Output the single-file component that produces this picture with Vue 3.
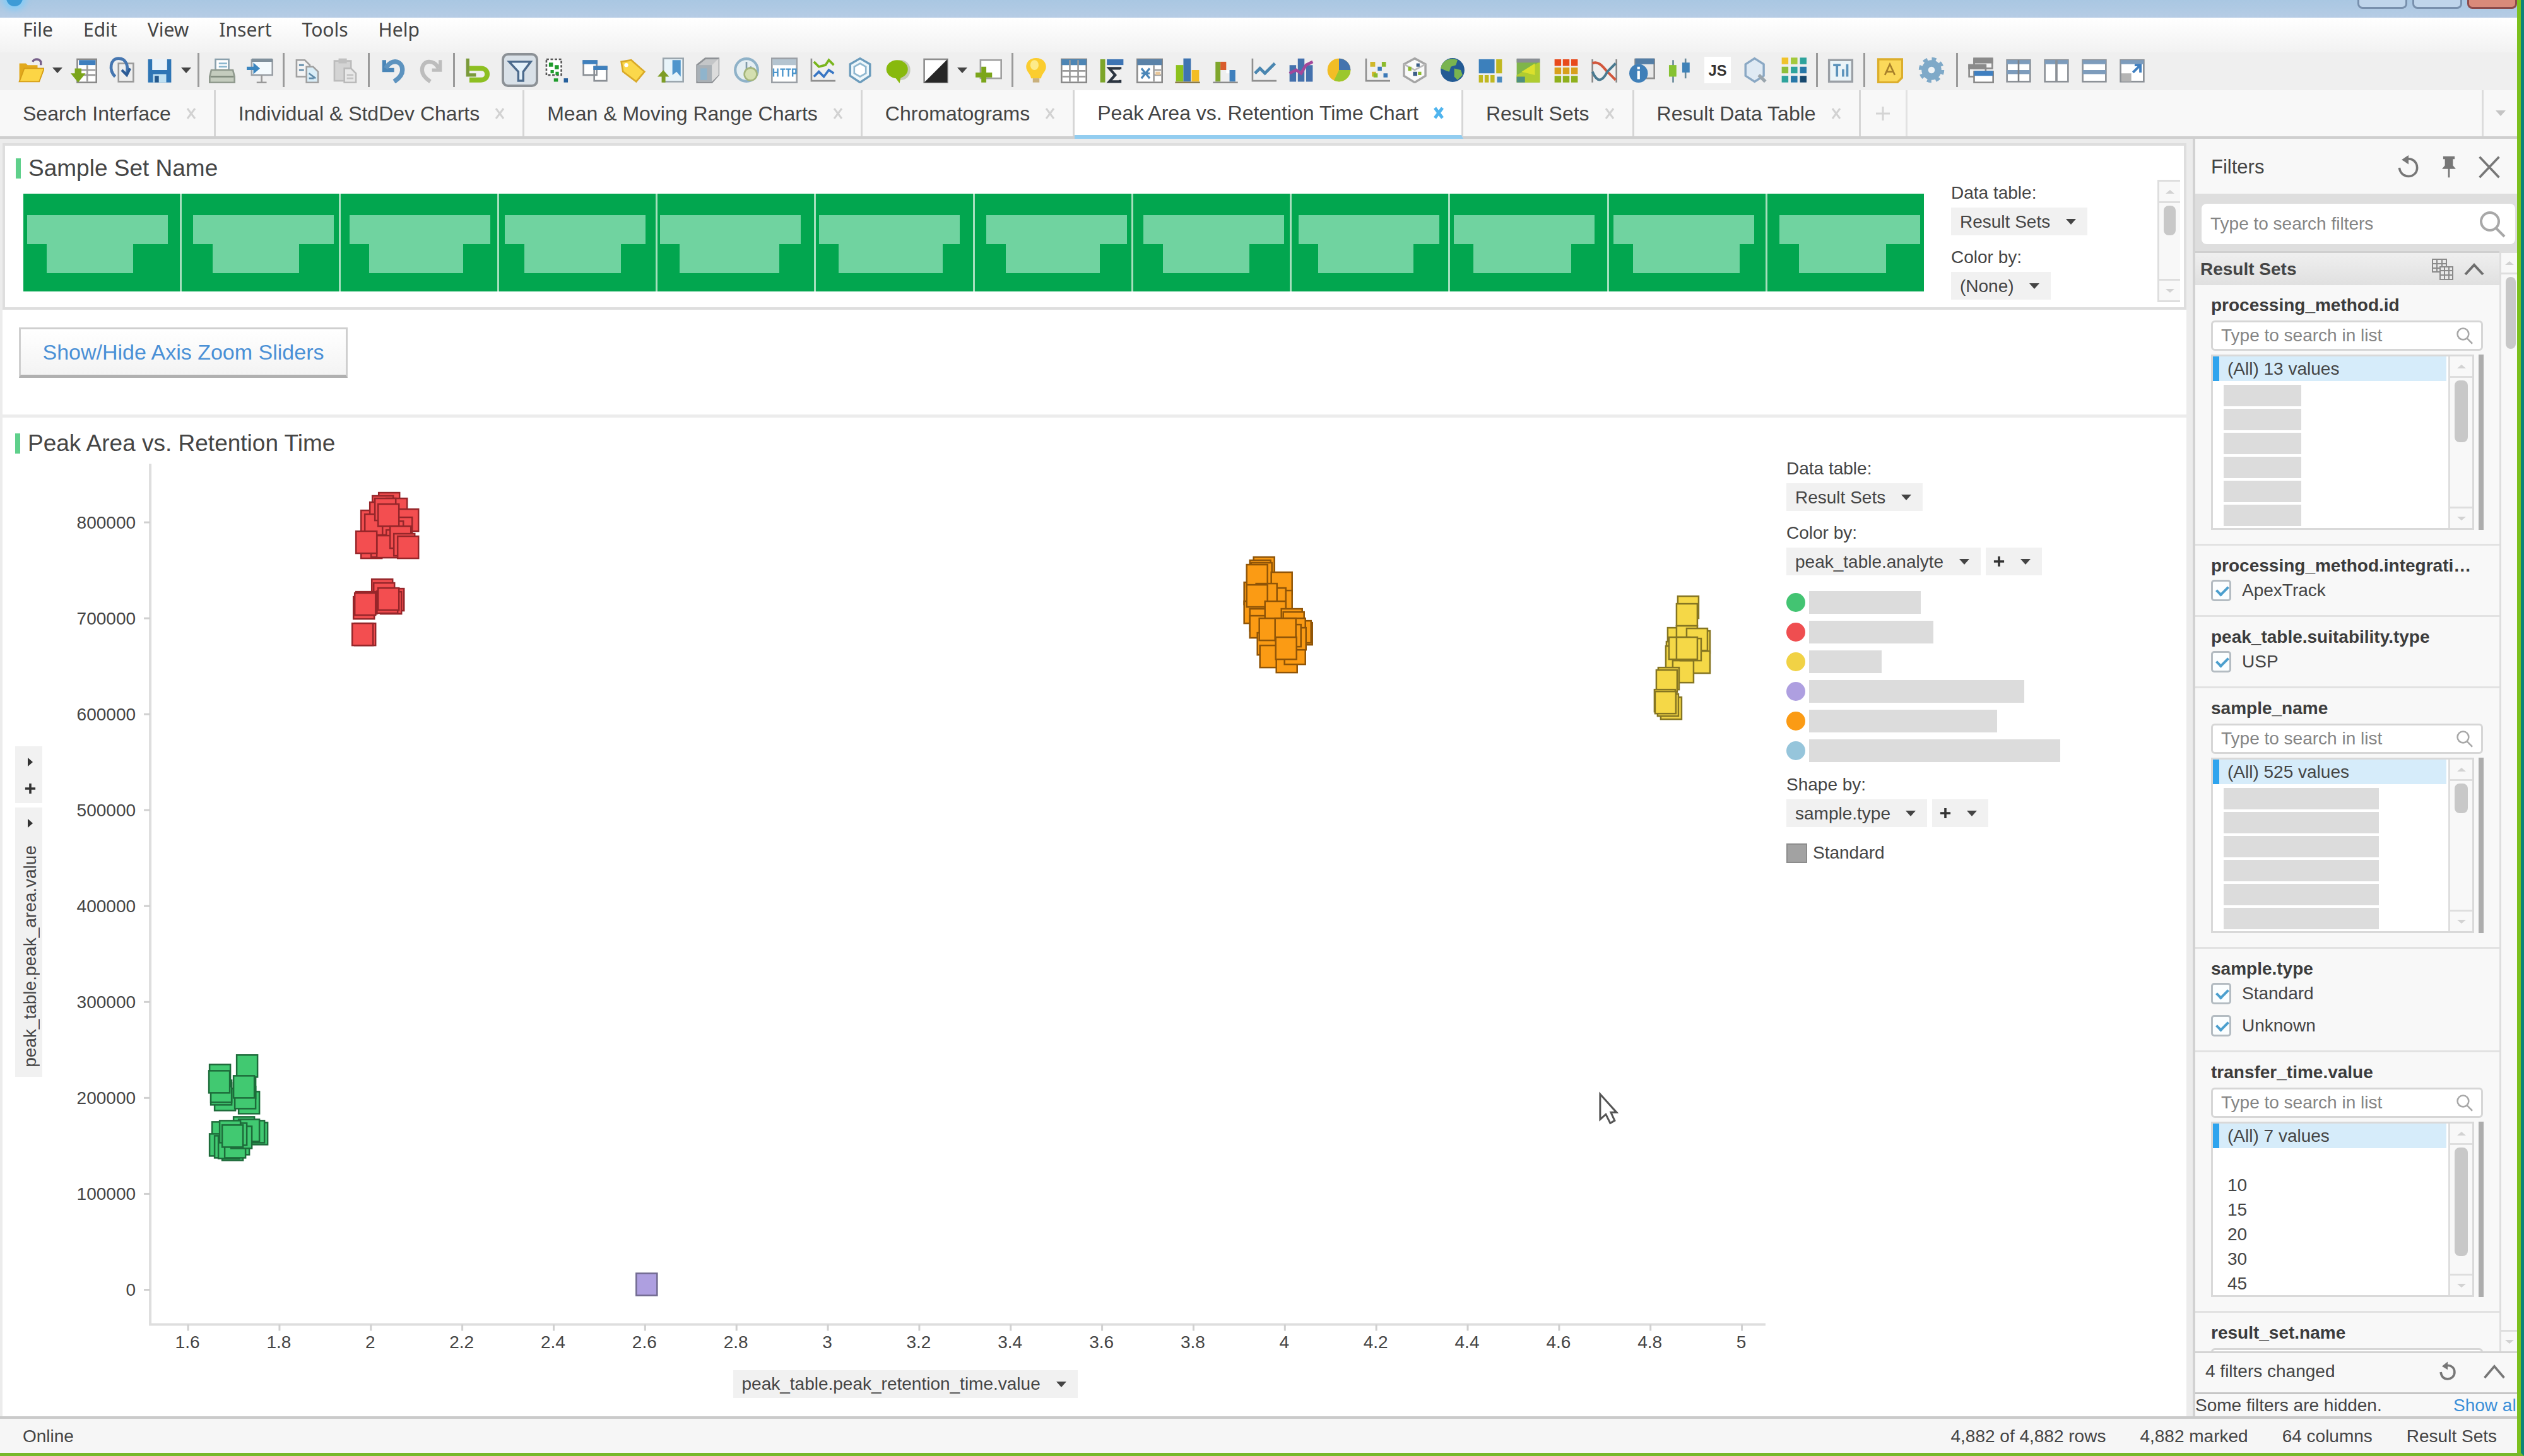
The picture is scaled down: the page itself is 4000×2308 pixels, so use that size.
<script setup>
import { ref } from 'vue'

const menus = ['File', 'Edit', 'View', 'Insert', 'Tools', 'Help']

const tabs = [
  'Search Interface',
  'Individual & StdDev Charts',
  'Mean & Moving Range Charts',
  'Chromatograms',
  'Peak Area vs. Retention Time Chart',
  'Result Sets',
  'Result Data Table',
]
const activeTab = ref(4)

const frame = '<rect x="1" y="2" width="14" height="13" fill="#fff" stroke="#8b9096"/>'
const axes = '<path d="M1.5 1v13.5H16" fill="none" stroke="#8f8f8f"/>'
const gridBase = '<rect x=".5" y="1.500" width="15" height="14" fill="#fff" stroke="#8a8a8a"/>'

// Toolbar glyphs, drawn on a 16 × 16 grid
const art = {
  open: '<path d="M1 15V4h4l1 1h6v10z" fill="#e2a91c"/><path d="M1 15l3-8h12l-3 8z" fill="#fcd545" stroke="#d59d17" stroke-width=".7"/><path d="M9 3c1-2 4-2 5 0v2" fill="none" stroke="#77608a" stroke-width="1.300"/>',
  addData: '<rect x="4" y="1.500" width="11.500" height="14" fill="#fff" stroke="#8a8a8a"/><path d="M5 2h10v3H5z" fill="#3f7fbe"/><path d="M5 8h10M5 11h10M10 5v10" stroke="#9a9a9a"/><path d="M2.500 7h4v3H9l-4.500 5.500L0 10h2.500z" fill="#7ba51b"/>',
  reload: '<path d="M6 4h9v11H6z" fill="#eee" stroke="#9a9a9a"/><path d="M4 12C0 8 1 1 6 1s6 5 5 9" fill="none" stroke="#4676b0" stroke-width="1.800"/><path d="M8 8l3 3 2-4" fill="none" stroke="#2d5c96" stroke-width="1.600"/>',
  save: '<path d="M1 1.500h14v14H1z" fill="#2e75b5"/><path d="M3.500 1.500h9V8h-9z" fill="#e9f2fa"/><path d="M4 10.500h8v5H4z" fill="#bfe0f2"/><path d="M5 11.500h2.500v4H5z" fill="#24588c"/>',
  print: '<path d="M4 1.500h8V8H4z" fill="#fff" stroke="#8aa0ac"/><path d="M6 4h5M6 6h5" stroke="#86b4cc"/><path d="M1.500 8h13l1 4v3.500H.5V12z" fill="#c4ccbe" stroke="#909a8e"/><path d="M1 12h14" stroke="#7f8a7c"/>',
  present: '<rect x="3" y="2" width="12.500" height="9" fill="#f4fafd" stroke="#9a9fa5"/><path d="M3 2h12.500" stroke="#80909c" stroke-width="2"/><path d="M9 11v4M6 15.500h6" stroke="#999"/><path d="M0 6h4V3.500L8 7l-4 3.500V8H0z" fill="#3c86bf"/>',
  copy: '<path d="M1.500 2h5l3 3v7h-8z" fill="#f4f4f4" stroke="#a0a0a0"/><path d="M7.500 6h4l3 3v6.500h-7z" fill="#d9edf7" stroke="#a0a0a0"/><path d="M3 5h3M3 8h3M9 10l4 3M9 13h3" stroke="#5f8aa8"/>',
  paste: '<rect x="1.500" y="2.500" width="10" height="12" fill="#d4d4d4" stroke="#bcbcbc"/><path d="M4 1h5v3H4z" fill="#c0c0c0"/><path d="M7.500 7h4l3 3v5.500h-7z" fill="#e8e8e8" stroke="#bababa"/><path d="M9 11h4M9 13h4" stroke="#c4c4c4"/>',
  undo: '<path d="M3 2v6h6" fill="none" stroke="#4a86b8" stroke-width="2.400"/><path d="M4 7c3-6 10-5 10 1 0 3-2 5-5 7" fill="none" stroke="#5d93bf" stroke-width="2.800"/>',
  redo: '<path d="M14 2v6H9" fill="none" stroke="#bdbdbd" stroke-width="2"/><path d="M13 7C10 1 3 2 3 8c0 3 2 5 5 7" fill="none" stroke="#bdbdbd" stroke-width="2.400"/>',
  revert: '<path d="M2 1v10h5" fill="none" stroke="#7a9a3a" stroke-width="2"/><path d="M3 7h7c5 0 5 7 0 7H3" fill="none" stroke="#8dbf21" stroke-width="3"/>',
  filter: '<path d="M1.500 3h13L10 9v5.500H7V9z" fill="#e4f1fa" stroke="#4b6a8c" stroke-width="1.300"/>',
  mark: '<rect x="1.500" y="1.500" width="9" height="9.500" fill="#fff" stroke="#555" stroke-dasharray="1.500 1"/><path d="M3 3.500h2.500V6H3zM6.500 5H9v2.500H6.500zM4 8h2v2H4zM7 9h2v2H7zM6 13h2.500v2H6z" fill="#1f9b2c"/><path d="M12 13h2.500v2.500H12z" fill="#245f9c"/>',
  windows: '<path d="M1 2.500h8V11H1zM7.500 6H15v8.500H7.500z" fill="#fff" stroke="#8a8f95"/><path d="M.5 2h9v2.500h-9zM7 5.500h8.500V8H7z" fill="#3f80bd"/>',
  tag: '<path d="M1 3l6-1 8 7-5 6-8-6z" fill="#fbd84b" stroke="#d9a928"/><circle cx="4" cy="5" r="1.200" fill="#fff"/>',
  bookmark: '<rect x="3.500" y="1" width="12" height="14" fill="#e8f4fa" stroke="#9aa5ad"/><path d="M9 2h5v10l-2.500-3L9 11z" fill="#4f95cc"/><path d="M3.500 8L7 12H4.800v3.500H2.500V12H0z" fill="#7d9d25"/>',
  cube: '<path d="M1 5l5-4h8v10l-4 4.500H1z" fill="#c4c6c8" stroke="#8f9296"/><path d="M1 5h9v10H1z" fill="#a9b0b6"/><path d="M10 5l4-4v10l-4 4z" fill="#dcdcdc"/><path d="M3 7h4v7H3z" fill="#8fb4cc"/>',
  clock: '<circle cx="8" cy="8" r="6.800" fill="#e4eef2" stroke="#8fb2c8" stroke-width="1.600"/><path d="M8 8V3M8 8l3-2" stroke="#7f9aa8"/><circle cx="10.500" cy="10.500" r="3.800" fill="#d4dfb0" stroke="#a4b57c"/>',
  http: '<rect x=".5" y="1" width="15" height="14.500" fill="#fff" stroke="#9a9fa5"/><path d="M1 1.500h14V5H1z" fill="#b4c4d0"/><path d="M1.500 7v5M4 7v5M1.500 9.500H4M5.500 7.500h3M7 7.500V12M9 7.500h3M10.500 7.500V12M13 12V7.500h2V10h-2" fill="none" stroke="#4a94cc" stroke-width=".9"/>',
  trend: axes + '<path d="M3 3l3 3 4-1 2-3 3 3" fill="none" stroke="#79b51c" stroke-width="1.400"/><path d="M3 12l3-3 3 3 3-4 3 2" fill="none" stroke="#3876c4" stroke-width="1.400"/>',
  hex: '<path d="M8 1l6 3.500v7L8 15.500 2 11.500v-7z" fill="#eef7fb" stroke="#6c9cbc" stroke-width="1.300"/><path d="M8 4l3.500 2v4L8 12l-3.500-2V6z" fill="#fff" stroke="#90b8d0"/>',
  bubble: '<ellipse cx="10" cy="8" rx="5.500" ry="6" fill="#c5cbb8"/><ellipse cx="7.500" cy="7.500" rx="6.500" ry="5.500" fill="#88b90d"/><path d="M6 12l3 4 1-5z" fill="#88b90d"/>',
  contrast: '<rect x="1" y="1.500" width="14" height="14" fill="#fff" stroke="#8e8e8e"/><path d="M15 1.500v14H1z" fill="#262626"/>',
  addPage: '<rect x="3" y="2" width="12.500" height="11" fill="#fff" stroke="#a0a0a0"/><path d="M3.500 6h3v3.500H10v3H6.500v3h-3v-3H0v-3h3.500z" fill="#7ba51b"/>',
  bulb: '<path d="M8 .8c-4 0-6 2.700-6 5.200 0 3 2.500 4 3 7h6c.5-3 3-4 3-7 0-2.500-2-5.200-6-5.200z" fill="#fbcd2f"/><ellipse cx="7" cy="5" rx="2.500" ry="3" fill="#fdeb8a"/><path d="M6 13h4v2.500H6z" fill="#c9b07c"/>',
  table: gridBase + '<path d="M.5 1.500h15V5H.5z" fill="#4d85b4"/><path d="M5.500 2v13M10.500 2v13M1 8.500h14M1 12h14" stroke="#9a9a9a"/>',
  sigma: '<path d="M1 1.500h3v14H1z" fill="#7ca52a"/><path d="M5 1.500h10V5H5z" fill="#3d74b4"/><path d="M13 7.500V7H6.500l3.500 4-3.500 4H13v-1" fill="none" stroke="#2b3440" stroke-width="1.600"/>',
  cross: gridBase + '<path d="M.5 1.500h15V5H.5z" fill="#5a82a8"/><path d="M10.500 5v10M11 8h4M11 11h4" stroke="#a0a0a0"/><path d="M3 7l5 6M8 7l-5 6M3 10h5" stroke="#4a86b8" stroke-width="1.200"/><path d="M11.500 9h3v2h-3z" fill="#e8c79a"/>',
  bars: '<path d="M1 5h4.500v10H1z" fill="#8cc21c"/><path d="M5.500 1H10v14H5.500z" fill="#3f74b0"/><path d="M10.500 8H15v7h-4.500z" fill="#f3bd24"/><path d="M.5 15.500h15" stroke="#8a7a4a"/>',
  waterfall: '<path d="M2 3h3v12H2z" fill="#7fa62c"/><path d="M5 3h3.500v5H5z" fill="#d95b2c"/><path d="M8.500 8H11v2H8.500z" fill="#fff"/><path d="M10.500 8H14v7h-3.500z" fill="#3f80bd"/><path d="M.5 15.500h15" stroke="#8a8a8a"/>',
  line: axes + '<path d="M3 10l3-3 3 3 6-6" fill="none" stroke="#4a86b0" stroke-width="1.800"/>',
  combo: '<path d="M1 5h4v10H1zM6 1h4v14H6zM11 5h4v10h-4z" fill="#4471ad"/><path d="M1 10l4-2 3 2 3-5 4-2" fill="none" stroke="#a4479a" stroke-width="1.800"/>',
  pie: '<circle cx="8" cy="8" r="7" fill="#f2bd25"/><path d="M8 8V1a7 7 0 017 7z" fill="#4474ae"/><path d="M8 8h7a7 7 0 01-10 6.300z" fill="#9bc72d"/>',
  scatter: axes + '<path d="M4 3h3v3H4zM5 9h2.500v3H5z" fill="#d0b82a"/><path d="M11 3h2.500v3H11zM6 10h2.500v2.500H6z" fill="#8cba2c"/><path d="M8.500 6H11v2.500H8.500zM12 10h2.500v2.500H12z" fill="#3c7ab8"/>',
  scatter3d: '<path d="M8 1l6.500 3.500v7L8 15.500l-6.500-4v-7z" fill="#fafafa" stroke="#a5a5a5" stroke-width="1.300"/><path d="M1.500 4.500L8 8l6.500-3.500" fill="none" stroke="#bbb"/><path d="M4 6h2v2.500H4zM10 9h2v2h-2z" fill="#8cba2c"/><path d="M7 9h2.500v2.500H7zM9 4h2v2H9z" fill="#3c5f88"/>',
  globe: '<circle cx="8" cy="8" r="7.200" fill="#235a94"/><path d="M3 3c2-2 6-2 8-1l-1 3-3 1-1 3-3-1-2-1c0-2 1-3 2-4zM9 7l4 1 1 3-3 3-2-2z" fill="#79b450"/>',
  treemap: '<path d="M1 1.500h9.500V10H1z" fill="#3c80bc"/><path d="M11.500 1.500H15V10h-3.500zM1 11h2.500v4.500H1zM4.500 11H7v4.500H4.500zM8 11h2.500v4.500H8z" fill="#c0b820"/><path d="M12 12h3v3.500h-3z" fill="#4a8ac0"/>',
  heat: '<rect x="1" y="1.500" width="14" height="14" fill="#7fb54a"/><path d="M1 11l14-8v12.500H1z" fill="#b0cc30"/><path d="M4 9l8-5v7z" fill="#dbe02c"/><path d="M1 1h14v2.500H1z" fill="#8a8f95"/><path d="M1 12h5v3.500H1z" fill="#4f8f80"/>',
  heatGrid: '<path d="M1 1.500h4v4H1zM6 1.500h4v4H6zM11 1.500h4v4h-4z" fill="#e84a1c"/><path d="M1 6.500h4v4H1zM6 6.500h4v4H6zM11 6.500h4v4h-4z" fill="#d8a01c"/><path d="M1 11.500h4v4H1zM6 11.500h4v4H6zM11 11.500h4v4h-4z" fill="#8fb01c"/>',
  parallel: '<path d="M1 1.500v14M15.500 1.500v14" stroke="#8a8a8a"/><path d="M1 4c4-2 7 3 9 5s3 3 5 5" fill="none" stroke="#d2573c" stroke-width="1.500"/><path d="M1 9c3 7 6 6 9 0l5-5" fill="none" stroke="#4a7a90" stroke-width="1.500"/>',
  info: '<path d="M4 1.500h11.500V13H4z" fill="#e8e8e8" stroke="#909090"/><path d="M4 1h11.500v3.500H4z" fill="#547ea6"/><circle cx="6" cy="10" r="5.600" fill="#3f7fb8"/><path d="M6 6v1.500M6 8.500v5" stroke="#fff" stroke-width="1.600"/>',
  box: '<path d="M4 2v13.500M11.500 1v12" stroke="#6a8a9a"/><path d="M1.500 5h4.500v7H1.500z" fill="#86c232"/><path d="M9.500 3.500H14v6H9.500z" fill="#3f82b8"/>',
  js: '<rect width="16" height="16" fill="#fff"/><text x="8" y="11.500" font-size="9" font-weight="700" font-family="Liberation Sans, sans-serif" text-anchor="middle" fill="#333">JS</text>',
  find: '<path d="M7.500 1l5.500 3.500v7L7.500 15 2 11.500v-7z" fill="#dfeaf4" stroke="#8aa8c4" stroke-width="1.300"/><path d="M10 11l4 4" stroke="#9aa5ad" stroke-width="2"/>',
  tiles: '<path d="M1 .5h4v4H1z" fill="#f0c32c"/><path d="M6.500.5h4v4h-4z" fill="#a4c93c"/><path d="M12 .5h4v4h-4z" fill="#2ea39c"/><path d="M1 6h4v4H1z" fill="#8fbf3a"/><path d="M6.500 6h4v4h-4z" fill="#2ea39c"/><path d="M12 6h4v4h-4z" fill="#2878a8"/><path d="M1 11.500h4v4H1z" fill="#2ea39c"/><path d="M6.500 11.500h4v4h-4z" fill="#2878a8"/><path d="M12 11.500h4v4h-4z" fill="#17486e"/>',
  text: '<rect x="1" y="2" width="14" height="13" fill="#eaf4f8" stroke="#9a9fa5" stroke-width="1.300"/><path d="M3.500 5H8M5.800 5v7M9.500 12V7.500M12 12V4.500" stroke="#5b93bb" stroke-width="1.400"/>',
  note: '<path d="M1 1.500h14.500v11l-3 3H1z" fill="#fbd95a" stroke="#dcae2c" stroke-width="1.300"/><path d="M5 11l3-6.500L11 11M6 9h4" fill="none" stroke="#a8802a"/>',
  gear: '<circle cx="8" cy="8" r="6" fill="#7fa9c8"/><circle cx="8" cy="8" r="6.600" fill="none" stroke="#7fa9c8" stroke-width="2.200" stroke-dasharray="2.600 2.580"/><circle cx="8" cy="8" r="2" fill="#eef2f5"/>',
  cascade: '<path d="M4 1h11v6H4zM1 5h10v7H1z" fill="#f4f4f4" stroke="#8a8a8a"/><path d="M3.500 1h12v3h-12zM.5 4.500h10.500v3H.5z" fill="#8a8a8a"/><rect x="4" y="9" width="11.500" height="6.500" fill="#fff" stroke="#8a8a8a"/><path d="M4 8.500h11.500v3H4z" fill="#3f7fc0"/>',
  quad: frame + '<path d="M1 2h14v2.500H1zM1 8h14v2.500H1z" fill="#7d9cbc"/><path d="M8 2v13" stroke="#7d8085"/>',
  cols: frame + '<path d="M1 2h14v2.500H1z" fill="#7d9cbc"/><path d="M8 2v13" stroke="#8b9096" stroke-width="1.400"/>',
  rows: frame + '<path d="M1 2h14v2.500H1zM1 8h14v2.500H1z" fill="#7d9cbc"/>',
  maxi: frame + '<path d="M1 2h14v2.500H1z" fill="#7d9cbc"/><path d="M1.500 10h6v5h-6z" fill="#b4b4b4"/><path d="M8.500 9.500L13 5M9.500 5H13v4.500" fill="none" stroke="#3f7fc0" stroke-width="1.500"/>',
}

const toolbar = [
  'open', 'v', 'addData', 'reload', 'save', 'v', '|', 'print', 'present', '|', 'copy', 'paste', '|',
  'undo', 'redo', '|', 'revert', 'filter', 'mark', 'windows', 'tag', 'bookmark', 'cube', 'clock', 'http',
  'trend', 'hex', 'bubble', 'contrast', 'v', 'addPage', '|', 'bulb', 'table', 'sigma', 'cross', 'bars',
  'waterfall', 'line', 'combo', 'pie', 'scatter', 'scatter3d', 'globe', 'treemap', 'heat', 'heatGrid',
  'parallel', 'info', 'box', 'js', 'find', 'tiles', '|', 'text', '|', 'note', 'gear', '|',
  'cascade', 'quad', 'cols', 'rows', 'maxi',
]

// Sample-set blocks: shift of the masked name and width of its second line
const sampleSets = [
  [6, 137], [18, 137], [14, 149], [9, 153], [4, 158], [5, 165],
  [18, 149], [16, 137], [11, 151], [6, 155], [7, 169], [19, 138],
]

const yTicks = [800000, 700000, 600000, 500000, 400000, 300000, 200000, 100000, 0]
const yPos = (v) => 2044 - (v / 100000) * 152
const xTicks = Array.from({ length: 18 }, (_, i) => Number((1.6 + i * 0.2).toFixed(1)))
const xPos = (i) => 298 + i * 144.8

const clusters = [
  {
    fill: '#f34e50', stroke: '#96262a',
    points: [
      [600, 781], [590, 786], [612, 790], [630, 807], [572, 809], [586, 796], [578, 815], [620, 820], [606, 826],
      [594, 790], [599, 799], [572, 850], [588, 848], [612, 840], [597, 849], [618, 834], [624, 846], [630, 850],
      [564, 842], [589, 918], [592, 924], [607, 933], [603, 938], [597, 937], [599, 932], [564, 938], [560, 946],
      [562, 940], [562, 988], [558, 988],
    ],
  },
  {
    fill: '#fb9b14', stroke: '#8f5407',
    points: [
      [1986, 883], [1980, 888], [1982, 892], [2014, 907], [2014, 936], [2004, 932], [1971, 923], [1975, 895],
      [1990, 925], [1971, 953], [1975, 927], [1980, 965], [1980, 976], [2004, 953], [2030, 965], [2033, 970],
      [2046, 987], [2044, 984], [2035, 980], [1992, 1003], [1996, 1023], [2022, 1031], [2035, 1018], [2036, 995],
      [2028, 990], [1995, 980], [2020, 980], [2021, 1010],
    ],
  },
  {
    fill: '#f5d847', stroke: '#857522',
    points: [
      [2658, 945], [2656, 957], [2642, 995], [2656, 992], [2676, 1000], [2672, 996], [2676, 1032], [2640, 1017],
      [2639, 1024], [2650, 1047], [2644, 1010], [2662, 1012], [2656, 1010], [2627, 1058], [2624, 1062],
      [2631, 1105], [2626, 1100], [2621, 1093], [2622, 1096],
    ],
  },
  {
    fill: '#41c971', stroke: '#1d6b3a',
    points: [
      [340, 1725], [334, 1716], [334, 1712], [332, 1687], [331, 1697], [378, 1730], [372, 1706], [375, 1672],
      [372, 1722], [370, 1705], [336, 1778], [332, 1797], [340, 1800], [352, 1804], [346, 1801], [391, 1779],
      [386, 1776], [370, 1770], [378, 1774], [362, 1795], [356, 1800], [366, 1785], [358, 1780], [348, 1776], [352, 1783],
    ],
  },
  { fill: '#ae9fe0', stroke: '#716a90', points: [[1008, 2018]] },
]

const analytes = [
  ['#43c472', 177], ['#ef4e50', 197], ['#f1d245', 115], ['#ae9fe0', 341], ['#fb9b14', 298], ['#96c5db', 398],
]

const filterGroups = [
  { name: 'processing_method.id', list: '(All) 13 values', masks: 123, thumb: 98 },
  { name: 'processing_method.integration_algorithm', checks: ['ApexTrack'] },
  { name: 'peak_table.suitability.type', checks: ['USP'] },
  { name: 'sample_name', list: '(All) 525 values', masks: 246, thumb: 47 },
  { name: 'sample.type', checks: ['Standard', 'Unknown'] },
  { name: 'transfer_time.value', list: '(All) 7 values', values: ['', '10', '15', '20', '30', '45'], thumb: 172 },
  { name: 'result_set.name', list: '(All) 9 values', values: [], thumb: 90 },
]
</script>

<template>
  <div class="app">
    <header class="titlebar">
      <span class="orb"></span>
      <div class="win-buttons">
        <button class="win" aria-label="Minimize"></button>
        <button class="win" aria-label="Maximize"></button>
        <button class="win close" aria-label="Close"></button>
      </div>
    </header>

    <nav class="menubar">
      <button v-for="m in menus" :key="m" class="menu">{{ m }}</button>
    </nav>

    <div class="toolbar">
      <template v-for="(t, i) in toolbar" :key="i">
        <span v-if="t === '|'" class="sep"></span>
        <button v-else-if="t === 'v'" class="drop" aria-label="More"><i class="tri"></i></button>
        <button v-else class="tool" :class="{ pressed: t === 'filter', wide: t === 'note' || t === 'gear' }" :aria-label="t">
          <svg viewBox="0 0 16 16" v-html="art[t]"></svg>
        </button>
      </template>
    </div>

    <div class="tabs">
      <div v-for="(t, i) in tabs" :key="t" class="tab" :class="{ active: i === activeTab }">
        <button class="tab-name" @click="activeTab = i">{{ t }}</button>
        <button class="tab-x" :aria-label="'Close ' + t">
          <svg viewBox="0 0 16 20"><path d="M2 2l12 16M14 2L2 18" /></svg>
        </button>
      </div>
      <button class="tab-add" aria-label="New page">
        <svg viewBox="0 0 24 24"><path d="M12 1v22M1 12h22" /></svg>
      </button>
      <button class="tab-more" aria-label="All pages"><i class="tri pale"></i></button>
    </div>

    <div class="work">
      <main class="main">
        <section class="panel samples">
          <div class="samples-left">
            <h2>Sample Set Name</h2>
            <div class="tiles">
              <div v-for="(s, i) in sampleSets" :key="i" class="tile">
                <div class="mask-top" :style="{ marginLeft: s[0] + 'px' }"></div>
                <div class="mask-low" :style="{ marginLeft: s[0] + 31 + 'px', width: s[1] + 'px' }"></div>
              </div>
            </div>
          </div>
          <div class="samples-legend">
            <label for="dt1">Data table:</label>
            <div class="pick"><select id="dt1"><option>Result Sets</option></select><i class="tri"></i></div>
            <label for="cb1">Color by:</label>
            <div class="pick"><select id="cb1"><option>(None)</option></select><i class="tri"></i></div>
          </div>
          <div class="scroll samples-scroll">
            <span class="arrow up"><i></i></span>
            <span class="track"><b :style="{ height: '47px' }"></b></span>
            <span class="arrow down"><i></i></span>
          </div>
        </section>

        <section class="button-row">
          <button class="zoom-btn">Show/Hide Axis Zoom Sliders</button>
        </section>

        <section class="chart">
          <h2>Peak Area vs. Retention Time</h2>
          <div class="chart-body">
            <div class="y-select">
              <button class="y-add" aria-label="Add column">
                <svg class="play" viewBox="0 0 10 14"><path d="M1 0l8 7-8 7z" /></svg>
                <svg class="plus" viewBox="0 0 20 20"><path d="M10 1v18M1 10h18" /></svg>
              </button>
              <button class="y-name">
                <svg class="play" viewBox="0 0 10 14"><path d="M1 0l8 7-8 7z" /></svg>
                <span>peak_table.peak_area.value</span>
              </button>
            </div>
            <div class="plot-col">
              <svg class="plot" viewBox="80 725 2750 1430">
                <path d="M238 735V2099H2797" fill="none" stroke="#dedede" stroke-width="4" />
                <g v-for="y in yTicks" :key="'y' + y">
                  <path :d="`M228 ${yPos(y)}h10`" stroke="#d0d0d0" stroke-width="3" />
                  <text x="215" :y="yPos(y) + 10" text-anchor="end">{{ y }}</text>
                </g>
                <g v-for="(x, i) in xTicks" :key="'x' + x">
                  <path :d="`M${xPos(i)} 2099v10`" stroke="#d0d0d0" stroke-width="3" />
                  <text :x="xPos(i) - 1" y="2136" text-anchor="middle">{{ x }}</text>
                </g>
                <g v-for="c in clusters" :key="c.fill" :fill="c.fill" :stroke="c.stroke" stroke-width="2.500">
                  <rect v-for="(p, i) in c.points" :key="i" :x="p[0]" :y="p[1]" width="33" height="35" />
                </g>
                <path class="pointer" d="M2535 1734v40l9-8 7 14 7-4-6-13h9z" />
              </svg>
              <div class="x-select">
                <div class="pick">
                  <select aria-label="X axis"><option>peak_table.peak_retention_time.value</option></select><i class="tri"></i>
                </div>
              </div>
            </div>
            <div class="legend">
              <label for="dt2">Data table:</label>
              <div class="pick"><select id="dt2"><option>Result Sets</option></select><i class="tri"></i></div>
              <label for="cb2">Color by:</label>
              <div class="pick-row">
                <div class="pick"><select id="cb2"><option>peak_table.analyte</option></select><i class="tri"></i></div>
                <button class="add" aria-label="Add color column">
                  <svg class="plus" viewBox="0 0 20 20"><path d="M10 1v18M1 10h18" /></svg><i class="tri"></i>
                </button>
              </div>
              <ul class="colors">
                <li v-for="a in analytes" :key="a[0]">
                  <span class="dot" :style="{ background: a[0] }"></span>
                  <span class="mask" :style="{ width: a[1] + 'px' }"></span>
                </li>
              </ul>
              <label for="sb">Shape by:</label>
              <div class="pick-row">
                <div class="pick"><select id="sb"><option>sample.type</option></select><i class="tri"></i></div>
                <button class="add" aria-label="Add shape column">
                  <svg class="plus" viewBox="0 0 20 20"><path d="M10 1v18M1 10h18" /></svg><i class="tri"></i>
                </button>
              </div>
              <div class="shape"><span class="swatch"></span>Standard</div>
            </div>
          </div>
        </section>
      </main>

      <aside class="filters">
        <div class="f-head">
          <h3>Filters</h3>
          <button aria-label="Reset filters">
            <svg viewBox="0 0 40 44"><path d="M17 8c10-2 18 5 18 15 0 9-7 15-15 15S5 32 4 23" fill="none" stroke="#777" stroke-width="4" /><path d="M8 9l12-8v16z" fill="#777" /></svg>
          </button>
          <button aria-label="Pin">
            <svg viewBox="0 0 40 44"><path d="M10 3h20v5h-3v11l5 6H8l5-6V8h-3z" fill="#777" /><path d="M20 24v16" stroke="#777" stroke-width="3" /></svg>
          </button>
          <button aria-label="Close filters">
            <svg viewBox="0 0 40 44"><path d="M3 4l34 36M37 4L3 40" stroke="#777" stroke-width="4" /></svg>
          </button>
        </div>
        <div class="f-search">
          <label class="field big">
            <input type="text" placeholder="Type to search filters" aria-label="Search filters" />
            <svg viewBox="0 0 44 44"><circle cx="18" cy="18" r="14" /><path d="M28 29l13 13" /></svg>
          </label>
        </div>
        <div class="f-body">
          <div class="f-list">
            <div class="g-head">
              <h4>Result Sets</h4>
              <svg class="g-grid" viewBox="0 0 36 36"><path d="M2 2h22v20H2zM2 9h22M2 16h22M9 2v20M17 2v20" /><path d="M14 14h20v20H14z" fill="#e8e8e8" /><path d="M14 20h20M14 27h20M21 14v20M28 14v20" /></svg>
              <svg class="g-chev" viewBox="0 0 32 22"><path d="M2 19L16 4l14 15" /></svg>
            </div>
            <fieldset v-for="f in filterGroups" :key="f.name" class="f-item">
              <h5>{{ f.name }}</h5>
              <template v-if="f.list">
                <label class="field small">
                  <input type="text" placeholder="Type to search in list" :aria-label="'Search ' + f.name" />
                  <svg viewBox="0 0 44 44"><circle cx="18" cy="18" r="14" /><path d="M28 29l13 13" /></svg>
                </label>
                <div class="list-row">
                  <div class="list-box">
                    <ul class="values">
                      <li class="sel">{{ f.list }}</li>
                      <template v-if="f.masks">
                        <li v-for="n in 6" :key="n" class="masked"><span :style="{ width: f.masks + 'px' }"></span></li>
                      </template>
                      <li v-for="v in f.values" :key="v">{{ v }}</li>
                    </ul>
                    <div class="scroll">
                      <span class="arrow up"><i></i></span>
                      <span class="track"><b :style="{ height: f.thumb + 'px' }"></b></span>
                      <span class="arrow down"><i></i></span>
                    </div>
                  </div>
                  <span class="grip"></span>
                </div>
              </template>
              <label v-for="c in f.checks" :key="c" class="check"><input type="checkbox" checked />{{ c }}</label>
            </fieldset>
          </div>
          <div class="scroll outer">
            <span class="arrow up"><i></i></span>
            <span class="track"><b :style="{ height: '114px' }"></b></span>
            <span class="arrow down"><i></i></span>
          </div>
        </div>
        <div class="f-changed">
          <span>4 filters changed</span>
          <button aria-label="Undo changes">
            <svg viewBox="0 0 40 44"><path d="M18 12c8-2 14 4 14 11 0 7-5 12-12 12S9 30 8 23" fill="none" stroke="#777" stroke-width="4" /><path d="M10 13l10-8v14z" fill="#777" /></svg>
          </button>
          <button aria-label="Expand">
            <svg viewBox="0 0 40 44"><path d="M3 33l17-20 17 20" fill="none" stroke="#777" stroke-width="4" /></svg>
          </button>
        </div>
        <div class="f-hidden"><span>Some filters are hidden.</span><a href="#">Show all</a></div>
      </aside>
    </div>

    <footer class="status">
      <span class="online">Online</span>
      <span>4,882 of 4,882 rows</span>
      <span>4,882 marked</span>
      <span>64 columns</span>
      <span>Result Sets</span>
    </footer>
  </div>
</template>

<style>
body { margin: 0; background: #fff; }
</style>

<style scoped>
* { box-sizing: border-box; }
button, select, input {
  font: inherit; color: inherit; margin: 0; padding: 0; border: 0; background: none; border-radius: 0;
}
h2, h3, h4, h5, ul, fieldset { margin: 0; padding: 0; border: 0; min-width: 0; list-style: none; font-weight: 400; }
svg { display: block; }

.app {
  display: flex; flex-direction: column; height: 100vh; overflow: hidden;
  font-family: "Liberation Sans", Arial, sans-serif; font-size: 28px; color: #454545; background: #efefef;
  border-bottom: 5px solid #76b82a; border-right: 5px solid #0b8577; box-shadow: inset -6px 0 #7cc01e; padding-right: 6px;
}
.titlebar { flex: none; height: 28px; background: linear-gradient(#a9c7e2, #b6cce5); display: flex; justify-content: space-between; overflow: hidden; }
.orb { width: 26px; height: 26px; margin: -16px 0 0 10px; border-radius: 50%; background: #3d9bd6; box-shadow: 0 0 10px 6px #86cbf5; }
.win-buttons { display: flex; gap: 8px; margin-top: -26px; }
.win { width: 79px; height: 40px; border: 3px solid #7890ad; border-radius: 8px; background: #bfd5eb; }
.win.close { background: #d98a7a; border-color: #8d4b4b; }

.menubar { flex: none; display: flex; height: 55px; padding: 0 0 18px 36px; gap: 48px; background: linear-gradient(#fff, #f2f2f2); font-family: "Noto Sans", sans-serif; font-size: 30px; }
.menu { line-height: 37px; }

.toolbar { flex: none; height: 60px; padding: 0 0 4px 19px; display: flex; align-items: center; background: #efefef; }
.tool { flex: none; width: 60px; height: 54px; display: flex; align-items: center; justify-content: center; }
.tool svg { width: 42px; height: 42px; }
.tool.pressed { width: 58px; margin: 0 0 0 8px; border: 4px solid #8c9196; border-radius: 10px; background: #d9e1e8; }
.tool.wide { width: 66px; }
.drop { flex: none; width: 24px; height: 54px; display: flex; align-items: center; justify-content: center; }
.sep { flex: none; width: 15px; height: 54px; background: linear-gradient(#9a9a9a, #9a9a9a) center / 3px 100% no-repeat; }
.tri { display: block; width: 0; height: 0; border: 8px solid transparent; border-top: 9px solid #444; border-bottom: 0; }
.tri.pale { border-top-color: #c4c4c4; }

.tabs { flex: none; display: flex; height: 77px; background: #f8f8f8; border-bottom: 4px solid #cfcfcf; font-size: 32px; }
.tab { display: flex; align-items: center; gap: 24px; padding: 0 28px 0 36px; border-right: 3px solid #d6d6d6; }
.tab-name { line-height: 40px; white-space: nowrap; }
.tab-x svg { width: 16px; height: 20px; stroke: #d2d2d2; stroke-width: 3; }
.tab.active { background: #fff; margin-bottom: -4px; border-bottom: 6px solid #92cdf0; }
.tab.active .tab-x svg { stroke: #4fb4ee; stroke-width: 5; }
.tab-add { width: 74px; border-right: 3px solid #e2e2e2; display: flex; align-items: center; justify-content: center; }
.tab-add svg { width: 24px; height: 24px; stroke: #d4d4d4; stroke-width: 3; }
.tab-more { margin-left: auto; width: 56px; border-left: 3px solid #dcdcdc; display: flex; align-items: center; justify-content: center; }

.work { flex: 1; min-height: 0; display: flex; }
.main { flex: 1; min-width: 0; display: flex; flex-direction: column; padding: 7px 10px 0 4px; background: #ececec; }
h2 { font-size: 37px; line-height: 42px; padding-left: 12px; border-left: 8px solid #5fd08b; height: 32px; display: flex; align-items: center; }

.panel { background: #fff; border: 4px solid #dedede; }
.samples { flex: none; display: flex; height: 264px; }
.samples-left { flex: 1; min-width: 0; padding: 20px 0 0 17px; }
.tiles { display: flex; gap: 3px; margin: 24px 0 0 12px; background: #a5dfbd; height: 155px; }
.tile { flex: 1; min-width: 0; background: #02a64f; padding-top: 34px; }
.mask-top { width: 223px; height: 46px; background: #70d3a0; }
.mask-low { height: 46px; background: #70d3a0; }
.samples-legend { flex: none; width: 370px; padding: 52px 0 0 43px; height: 256px; }
label { display: block; line-height: 46px; }
.samples-legend .pick { margin-bottom: 12px; }
.samples-scroll { width: 36px; height: 194px; margin: 54px 6px 0 0; border-right: 3px solid #dedede; }

.pick { position: relative; display: table; height: 44px; background: #f1f1f1; }
.pick select { appearance: none; height: 44px; padding: 0 58px 0 14px; outline: none; }
.pick .tri { position: absolute; right: 18px; top: 18px; pointer-events: none; }

.scroll { flex: none; display: flex; flex-direction: column; border: 3px solid #dedede; border-right: 0; background: #f8f8f8; }
.arrow { flex: none; height: 34px; display: flex; align-items: center; justify-content: center; }
.arrow i { border: 7px solid transparent; }
.arrow.up { border-bottom: 3px solid #dedede; }
.arrow.down { border-top: 3px solid #dedede; }
.arrow.up i { border-top: 0; border-bottom: 6px solid #d2d2d2; }
.arrow.down i { border-bottom: 0; border-top: 6px solid #d2d2d2; }
.track { flex: 1; min-height: 0; padding: 4px 7px; }
.track b { display: block; background: #c8c8c8; border-radius: 8px; }

.button-row { flex: none; height: 166px; padding: 28px 0 0 26px; background: #fff; }
.zoom-btn { width: 521px; height: 80px; border: 3px solid #cfcfcf; border-bottom: 5px solid #b0b0b0; background: linear-gradient(#fff, #f3f3f3); color: #4a90d6; font-size: 34px; }

.chart { flex: 1; min-height: 0; display: flex; flex-direction: column; background: #fff; border-top: 5px solid #ececec; }
.chart h2 { flex: none; margin: 25px 0 6px 20px; }
.chart-body { flex: 1; min-height: 0; display: flex; padding-left: 20px; }
.y-select { flex: none; width: 43px; padding-top: 458px; display: flex; flex-direction: column; gap: 7px; }
.y-select button { width: 43px; padding-left: 5px; background: #f1f1f1; display: flex; flex-direction: column; align-items: center; }
.y-select .y-add { height: 90px; padding-top: 18px; gap: 26px; justify-content: flex-start; }
.y-select .y-name { height: 427px; padding-top: 18px; gap: 28px; justify-content: flex-start; }
.y-name span { writing-mode: vertical-rl; transform: rotate(180deg); line-height: 34px; white-space: nowrap; }
.play { width: 10px; height: 14px; fill: #333; }
.plus { width: 18px; height: 18px; stroke: #333; stroke-width: 4; }
.plot-col { flex: 1; min-width: 0; margin-left: 13px; }
.plot { width: 100%; height: auto; }
.plot text { font-size: 28px; fill: #454545; }
.pointer { fill: #fff; stroke: #555; stroke-width: 3; }
.x-select { display: flex; justify-content: center; padding: 16px 42px 0 0; }

.legend { flex: none; width: 634px; }
.legend label { line-height: 36px; }
.legend .pick { margin: 5px 0 17px; }
.pick-row { display: flex; gap: 8px; }
.add { width: 89px; height: 44px; margin-top: 5px; padding: 0 18px 0 12px; display: flex; align-items: center; justify-content: space-between; background: #f1f1f1; }
.legend .colors { margin: 2px 0 13px; }
.colors li { height: 47px; display: flex; align-items: center; gap: 6px; }
.dot { width: 30px; height: 30px; border-radius: 50%; }
.mask { height: 36px; background: #dcdcdc; }
.shape { display: flex; align-items: center; gap: 9px; line-height: 36px; margin-top: 6px; }
.swatch { width: 33px; height: 31px; background: #a2a2a2; border: 2px solid #8c8c8c; }

.filters { flex: none; width: 514px; display: flex; flex-direction: column; border-left: 4px solid #d2d2d2; background: #f8f8f8; overflow: hidden; }
.f-head { flex: none; height: 87px; display: flex; align-items: center; padding: 2px 24px 0 25px; gap: 24px; }
.f-head h3 { flex: 1; font-size: 31px; }
.f-head button svg, .f-changed button svg { width: 40px; height: 40px; }
.f-search { flex: none; height: 91px; padding: 16px 3px 0 10px; background: #dedede; }
.field { display: flex; align-items: center; background: #fff; line-height: 34px; }
.field input { flex: 1; min-width: 0; outline: none; color: #555; }
.field input::placeholder { color: #858585; opacity: 1; }
.field svg { fill: none; stroke: #a8a8a8; stroke-width: 4; }
.field.big { height: 64px; border-radius: 8px; padding: 0 14px 0 14px; }
.field.big svg { width: 44px; height: 44px; }
.field.small { height: 48px; border: 3px solid #d6d6d6; border-radius: 6px; margin: 7px 26px 0 0; padding: 0 12px 0 13px; }
.field.small svg { width: 28px; height: 28px; }

.f-body { flex: 1; min-height: 0; display: flex; overflow: hidden; }
.f-list { flex: 1; min-width: 0; overflow: hidden; }
.g-head { height: 54px; display: flex; align-items: center; padding: 0 24px 0 8px; gap: 16px; background: linear-gradient(#efefef, #e0e0e0); border-top: 3px solid #cfcfcf; }
h4 { flex: 1; font-size: 28px; font-weight: 700; }
.g-grid { width: 36px; height: 36px; fill: none; stroke: #8a8a8a; stroke-width: 2; }
.g-chev { width: 32px; height: 22px; fill: none; stroke: #6e6e6e; stroke-width: 4; }
.f-item { padding: 15px 0 22px 25px; border-bottom: 3px solid #e2e2e2; }
h5 { font-size: 28px; line-height: 34px; font-weight: 700; margin-right: 36px; overflow: hidden; white-space: nowrap; text-overflow: ellipsis; color: #3c3c3c; }
.list-row { display: flex; gap: 7px; margin: 6px 25px 0 0; height: 278px; }
.list-box { flex: 1; min-width: 0; display: flex; background: #fff; border: 3px solid #d9d9d9; }
.values { flex: 1; min-width: 0; overflow: hidden; }
.values li { height: 39px; line-height: 39px; padding-left: 23px; }
.values li.sel { background: #d6ecfa; border-left: 10px solid #2ea4ee; padding-left: 13px; margin-right: 3px; }
.values .masked { height: 38px; padding: 2px 0 0 17px; }
.values .sel + .masked { height: 42px; padding-top: 6px; }
.masked span { display: block; height: 34px; background: #dcdcdc; }
.list-box .scroll { width: 38px; border-width: 0 0 0 3px; }
.grip { flex: none; width: 8px; background: #adadad; }
.check { display: flex; align-items: center; gap: 17px; line-height: 34px; margin-top: 5px; }
.check + .check { margin-top: 17px; }
.check input { appearance: none; position: relative; width: 32px; height: 34px; border: 3px solid #b4bcc2; border-radius: 5px; background: #fbfeff; }
.check input:checked::before { content: ""; position: absolute; left: 9px; top: 3px; width: 8px; height: 15px; border: solid #4b9fce; border-width: 0 4px 4px 0; transform: rotate(45deg); }
.outer { width: 28px; border-bottom: 0; }
.outer .track { padding: 4px 2px 4px 7px; }

.f-changed { flex: none; height: 65px; display: flex; align-items: center; gap: 34px; padding: 0 16px 4px 16px; border-top: 3px solid #d4d4d4; }
.f-changed span { flex: 1; }
.f-hidden { flex: none; height: 38px; display: flex; border-top: 3px solid #c6c6c6; line-height: 35px; white-space: nowrap; }
.f-hidden span { flex: none; width: 409px; }
.f-hidden a { color: #3a8fd8; text-decoration: none; }

.status { flex: none; height: 58px; display: flex; align-items: center; gap: 54px; padding: 2px 32px 0 36px; background: #f6f6f6; border-top: 4px solid #cacaca; }
.online { flex: 1; }
</style>
